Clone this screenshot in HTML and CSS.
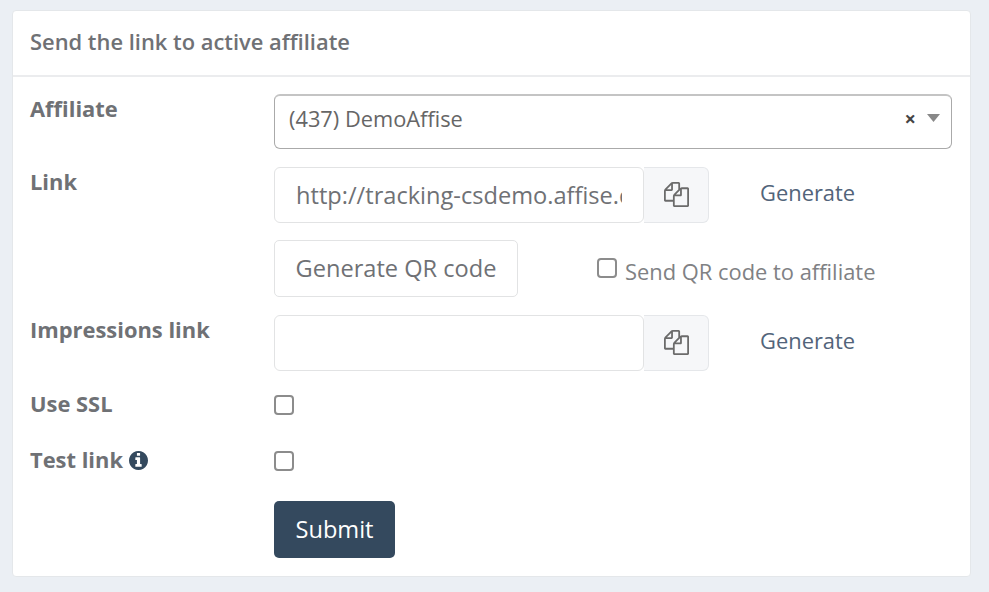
FILE: index.html
```
<!DOCTYPE html>
<html lang="en">
<head>
  <meta charset="UTF-8">
  <title>Send the link to active affiliate</title>
  <link rel="stylesheet" href="styles.css">
</head>
<body>

  <svg class="sprite" aria-hidden="true">
    <symbol id="copy" viewBox="0 0 1792 1792">
      <path d="M1696 384q40 0 68 28t28 68v1216q0 40-28 68t-68 28h-960q-40 0-68-28t-28-68v-288h-544q-40 0-68-28t-28-68v-672q0-40 20-88t48-76l408-408q28-28 76-48t88-20h416q40 0 68 28t28 68v328q68-40 128-40h416zm-544 213l-299 299h299v-299zm-640-384l-299 299h299v-299zm196 647l316-316v-416h-384v416q0 40-28 68t-68 28h-416v640h512v-256q0-40 20-88t48-76zm956 804v-1152h-384v416q0 40-28 68t-68 28h-416v640h896z"/>
    </symbol>
    <symbol id="info" viewBox="128 128 1536 1536">
      <path d="M1152 1376v-160q0-14-9-23t-23-9h-96v-512q0-14-9-23t-23-9h-320q-14 0-23 9t-9 23v160q0 14 9 23t23 9h96v320h-96q-14 0-23 9t-9 23v160q0 14 9 23t23 9h448q14 0 23-9t9-23zm-128-896v-160q0-14-9-23t-23-9h-192q-14 0-23 9t-9 23v160q0 14 9 23t23 9h192q14 0 23-9t9-23zm640 416q0 209-103 385.5t-279.5 279.5-385.5 103-385.5-103-279.5-279.5-103-385.5 103-385.5 279.5-279.5 385.5-103 385.5 103 279.5 279.5 103 385.5z"/>
    </symbol>
  </svg>

  <div class="panel">
    <div class="panel-heading">Send the link to active affiliate</div>
    <form class="panel-body">

      <div class="row">
        <label class="control-label">Affiliate</label>
        <div class="select">
          <span class="select-value">(437) DemoAffise</span>
          <span class="select-clear">×</span>
          <span class="select-arrow"></span>
        </div>
      </div>

      <div class="row">
        <label class="control-label" for="link">Link</label>
        <div class="field">
          <div class="input-group">
            <input class="form-control" id="link" type="text" value="http://tracking-csdemo.affise.com/click">
            <button class="addon" type="button"><svg class="icon-copy"><use href="#copy"/></svg></button>
          </div>
          <a class="generate">Generate</a>
        </div>
      </div>

      <div class="row row-qr">
        <div class="field">
          <button class="btn btn-default" type="button">Generate QR code</button>
          <label class="qr-label"><input class="check" type="checkbox"><span class="qr-text">Send QR code to affiliate</span></label>
        </div>
      </div>

      <div class="row">
        <label class="control-label" for="impressions">Impressions link</label>
        <div class="field">
          <div class="input-group">
            <input class="form-control" id="impressions" type="text">
            <button class="addon" type="button"><svg class="icon-copy"><use href="#copy"/></svg></button>
          </div>
          <a class="generate">Generate</a>
        </div>
      </div>

      <div class="row row-check">
        <label class="control-label" for="ssl">Use SSL</label>
        <input class="check" id="ssl" type="checkbox">
      </div>

      <div class="row row-check">
        <label class="control-label" for="test">Test link <svg class="icon-info"><use href="#info"/></svg></label>
        <input class="check" id="test" type="checkbox">
      </div>

      <div class="row row-submit">
        <button class="btn btn-primary" type="button">Submit</button>
      </div>

    </form>
  </div>

</body>
</html>
```
FILE: styles.css
```
* {
  box-sizing: border-box;
}
body {
  margin: 0;
  padding: 10px 18px 0 12px;
  background: #ebeff4;
  color: #6f7175;
  font-family: "Open Sans", sans-serif;
  font-size: 21.9px;
  line-height: 30px;
}
input, button {
  margin: 0;
  font-family: inherit;
  color: inherit;
}
.sprite {
  display: none;
}
.panel {
  height: 567px;
  background: #fff;
  border: 1px solid #e4e7ea;
  border-radius: 4px;
}
.panel-heading {
  height: 66px;
  padding: 16px 17px 0;
  border-bottom: 2px solid #ebecee;
  font-weight: 600;
}
.panel-body {
  display: flex;
  flex-direction: column;
  gap: 17px;
  padding: 17px 18px 0 17px;
}
.row {
  display: grid;
  grid-template-columns: 244px 1fr;
  height: 56px;
}
.row-qr {
  height: 57px;
  margin-bottom: 1px;
}
.row-check {
  height: 39px;
  margin-top: 1px;
  margin-bottom: -1px;
}
.row-qr .field,
.row-submit .btn {
  grid-column: 2;
}
.row-submit {
  height: 57px;
  margin-top: 1px;
}
.control-label {
  font-weight: 700;
}
.field {
  display: flex;
}

/* select */
.select {
  display: flex;
  height: 55px;
  padding: 8px 11px 0 14px;
  border: 1px solid #aaa;
  border-top: 2px solid #c4c4c4;
  border-radius: 6px;
  color: #666;
  font-size: 21.8px;
}
.select-value {
  flex: 1;
}
.select-clear {
  margin-right: 11px;
  color: #444;
  font-size: 20px;
  font-weight: 700;
}
.select-arrow {
  width: 13px;
  height: 8px;
  margin-top: 10px;
  background: #888;
  clip-path: polygon(0 0, 100% 0, 50% 100%);
}

/* inputs */
.input-group {
  display: flex;
  width: 435px;
}
.form-control {
  width: 370px;
  padding: 0 21px;
  border: 1px solid #e2e3e4;
  border-radius: 6px;
  background: #fff;
  font-size: 23.6px;
}
.addon {
  display: flex;
  flex: 1;
  align-items: center;
  justify-content: center;
  padding: 0 0 1px;
  border: 1px solid #e5e7ea;
  border-left: 0;
  border-radius: 0 6px 6px 0;
  background: #f6f7f9;
}
.icon-copy {
  width: 25px;
  height: 25px;
  fill: #6b6b6b;
}
.generate {
  padding: 11px 0 0 51px;
  color: #52647a;
}
.check {
  appearance: none;
  width: 20px;
  height: 20px;
  margin-top: 6px;
  border: 2px solid #8c8c8c;
  border-radius: 4px;
  background: #fff;
}
.icon-info {
  width: 19px;
  height: 19px;
  fill: #34495e;
  vertical-align: -2px;
}

/* buttons */
.btn {
  border-radius: 5px;
  font-size: 23.6px;
}
.btn-default {
  width: 244px;
  padding: 0 0 2px;
  border: 1px solid #e2e3e4;
  background: #fff;
}
.btn-primary {
  width: 121px;
  padding: 0 0 2px;
  border: 0;
  background: #34495e;
  color: #fff;
}
.qr-label {
  display: flex;
  margin-left: 79px;
  padding-top: 12px;
  color: #808184;
}
.qr-text {
  margin: 5px 0 0 8px;
}
```
